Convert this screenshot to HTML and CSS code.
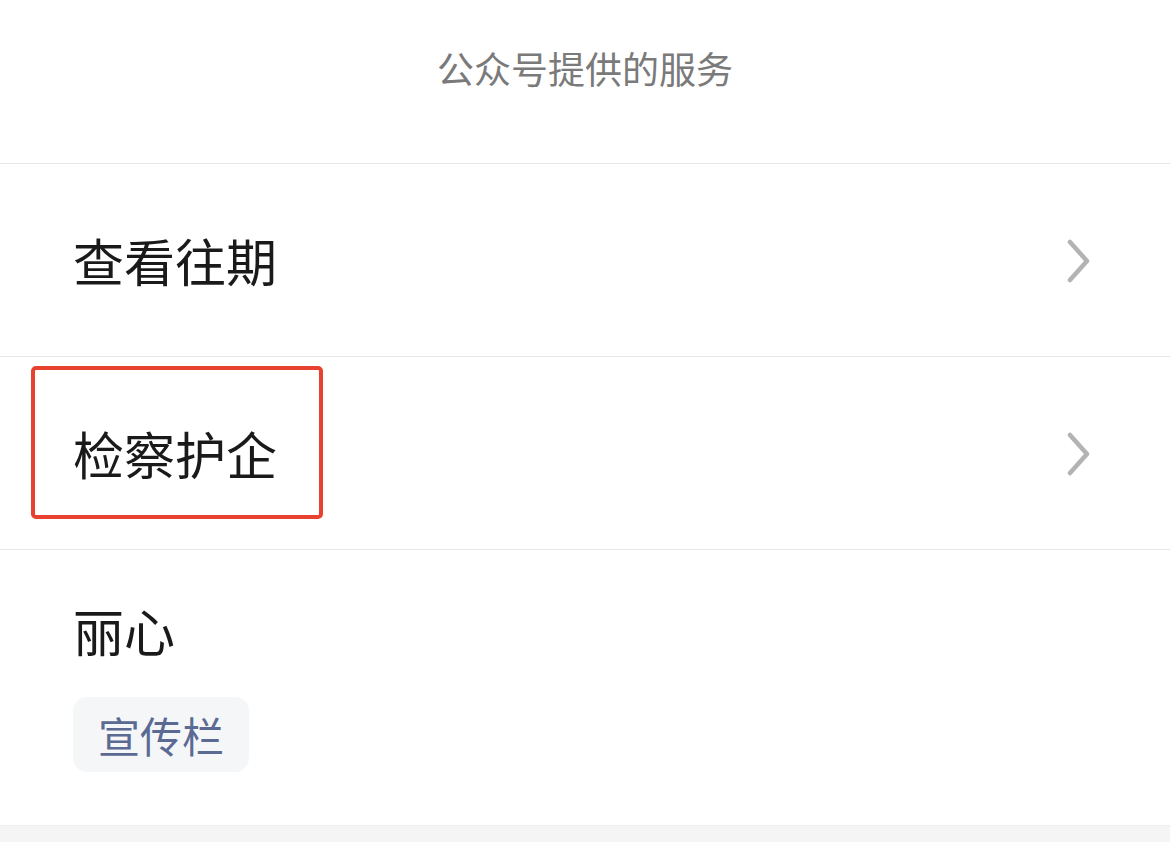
FILE: index.html
```html
<!DOCTYPE html>
<html lang="zh-CN">
<head>
    <meta charset="UTF-8">
    <meta name="viewport" content="width=device-width, initial-scale=1.0">
    <title>公众号提供的服务</title>
    <link rel="stylesheet" href="styles.css">
</head>
<body>
    <div class="sheet">
        <div class="sheet-title">公众号提供的服务</div>

        <div class="service-row">
            <span class="service-name">查看往期</span>
            <svg class="chevron" width="24" height="44" viewBox="0 0 24 44">
                <path d="M3 3 L20 22 L3 41" fill="none" stroke="#b3b3b3" stroke-width="4.5" stroke-linecap="round" stroke-linejoin="round"/>
            </svg>
        </div>

        <div class="service-row">
            <span class="service-name">检察护企</span>
            <svg class="chevron" width="24" height="44" viewBox="0 0 24 44">
                <path d="M3 3 L20 22 L3 41" fill="none" stroke="#b3b3b3" stroke-width="4.5" stroke-linecap="round" stroke-linejoin="round"/>
            </svg>
            <div class="highlight"></div> <!-- red annotation box -->
        </div>

        <div class="service-group">
            <div class="service-name">丽心</div>
            <div class="tags">
                <span class="tag">宣传栏</span>
            </div>
        </div>
    </div>
    <div class="footer-band"></div>
</body>
</html>
```

FILE: styles.css
```css
body {
    margin: 0;
    background: #fff;
    font-family: "Noto Sans CJK SC", "Noto Sans", sans-serif;
    color: #1a1a1a;
}
.sheet {
    width: 1170px;
    background: #fff;
}
.sheet-title {
    height: 164px;
    padding-top: 43px;
    box-sizing: border-box;
    text-align: center;
    font-size: 37px;
    line-height: 50px;
    color: #7a7a7a;
    border-bottom: 1px solid #e6e6e6;
}
.service-row {
    position: relative;
    height: 192px;
    display: flex;
    align-items: center;
    justify-content: space-between;
    padding: 0 79px 0 73px;
    border-bottom: 1px solid #e6e6e6;
}
.service-name {
    font-size: 51px;
    line-height: 60px;
    color: #1a1a1a;
}
.chevron {
    display: block;
    margin-top: 2px;
}
.highlight {
    position: absolute;
    left: 31px;
    top: 9px;
    width: 292px;
    height: 153px;
    box-sizing: border-box;
    border: 4px solid #e8412f;
    border-radius: 5px;
}
.service-group {
    padding: 50px 73px 53px;
}
.tags {
    display: flex;
    margin-top: 37px;
}
.tag {
    height: 75px;
    padding: 0 25px;
    background: #f5f6f8;
    border-radius: 14px;
    font-size: 42px;
    line-height: 75px;
    color: #5b6a92;
}
.footer-band {
    height: 40px;
    background: #f5f5f5;
    border-top: 1px solid #efefef;
}
```
